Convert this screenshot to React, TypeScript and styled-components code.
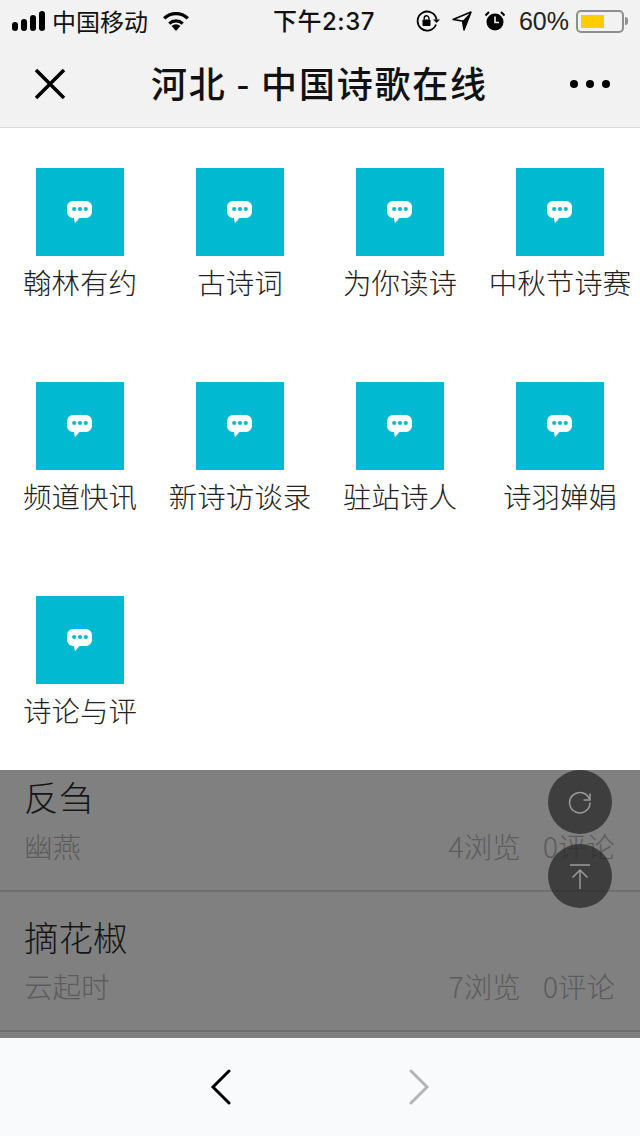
import React from 'react';
import styled, { createGlobalStyle } from 'styled-components';

const GlobalStyle = createGlobalStyle`
  html, body {
    margin: 0;
    padding: 0;
    background: #808080;
  }
  * {
    box-sizing: border-box;
  }
`;

const FONT = `"Noto Sans CJK SC", "Liberation Sans", sans-serif`;

const channels = [
  '翰林有约', '古诗词', '为你读诗', '中秋节诗赛',
  '频道快讯', '新诗访谈录', '驻站诗人', '诗羽婵娟',
  '诗论与评',
];

const articles = [
  { title: '反刍', author: '幽燕', views: 4, comments: 0 },
  { title: '摘花椒', author: '云起时', views: 7, comments: 0 },
  { title: '', author: '', views: 0, comments: 0 },
];

const Bubble = () => (
  <svg width="26" height="24" viewBox="0 0 26 24">
    <path
      d="M7 1h12a6 6 0 0 1 6 6v5a6 6 0 0 1-6 6h-6.500l-4.500 5.200-1.200-5.200h-.8a6 6 0 0 1-6-6v-5a6 6 0 0 1 6-6z"
      fill="#fff"
    />
    <circle cx="7.200" cy="9" r="2.100" fill="#01b9d1" />
    <circle cx="13" cy="9" r="2.100" fill="#01b9d1" />
    <circle cx="18.800" cy="9" r="2.100" fill="#01b9d1" />
  </svg>
);

const App = () => {
  return (
    <Page>
      <GlobalStyle />
      <Header>
        <StatusBar>
          <StatusLeft>
            <Signal>
              <Bar $h={9} />
              <Bar $h={12} />
              <Bar $h={16} />
              <Bar $h={20} />
            </Signal>
            <span>中国移动</span>
            <svg width="28" height="20" viewBox="0 0 28 20">
              <path d="M14 20l-4.400-5a6.200 6.200 0 0 1 8.800 0z" fill="#000" />
              <path d="M7.300 12.600a9.800 9.800 0 0 1 13.400 0" fill="none" stroke="#000" strokeWidth="3.200" />
              <path d="M2.200 7.400a17 17 0 0 1 23.600 0" fill="none" stroke="#000" strokeWidth="3.400" />
            </svg>
          </StatusLeft>
          <Clock>下午2:37</Clock>
          <StatusRight>
            <svg width="24" height="22" viewBox="0 0 24 22">
              <path d="M20 14.500a9.500 9.500 0 1 1 .5-5" fill="none" stroke="#000" strokeWidth="1.800" />
              <path d="M17 9.500h7l-3.500 3.500z" fill="#000" />
              <rect x="6.500" y="9.500" width="8" height="6.500" rx="1" fill="#000" />
              <path d="M8.200 9.500v-1.500a2.300 2.300 0 0 1 4.600 0v1.500" fill="none" stroke="#000" strokeWidth="1.400" />
            </svg>
            <LocationIcon width="20" height="20" viewBox="0 0 20 20">
              <path d="M1 8.500L19 1l-7 18-1.500-9z" fill="none" stroke="#000" strokeWidth="1.500" strokeLinejoin="round" />
              <path d="M19 1L10.500 10 12 19z" fill="#000" />
            </LocationIcon>
            <AlarmIcon width="20" height="20" viewBox="0 0 20 20">
              <circle cx="10" cy="11" r="8.500" fill="#000" />
              <path d="M10 5.500v6h4" fill="none" stroke="#f2f2f2" strokeWidth="1.600" />
              <path d="M.500 4.500L4 1M19.500 4.500L16 1" stroke="#000" strokeWidth="2" />
            </AlarmIcon>
            <Percent>60%</Percent>
            <Battery>
              <BatteryFill $level={60} />
            </Battery>
            <BatteryTip />
          </StatusRight>
        </StatusBar>
        <NavBar>
          <svg width="34" height="34" viewBox="0 0 34 34">
            <path d="M3 3l28 28M31 3L3 31" stroke="#000" strokeWidth="3.500" strokeLinecap="butt" fill="none" />
          </svg>
          <NavTitle>河北 - 中国诗歌在线</NavTitle>
          <Dots>
            <Dot />
            <Dot />
            <Dot />
          </Dots>
        </NavBar>
      </Header>

      <Body>
        <ArticleList>
          {articles.map((a, i) => (
            <ArticleRow key={i}>
              <ArticleTitle>{a.title}</ArticleTitle>
              {a.author && (
                <ArticleMeta>
                  <span>{a.author}</span>
                  <Stats>
                    <span>{a.views}浏览</span>
                    <span>{a.comments}评论</span>
                  </Stats>
                </ArticleMeta>
              )}
            </ArticleRow>
          ))}
        </ArticleList>

        <ChannelPanel>
          {channels.map((name) => (
            <ChannelCell key={name}>
              <ChannelTile>
                <Bubble />
              </ChannelTile>
              <ChannelName>{name}</ChannelName>
            </ChannelCell>
          ))}
        </ChannelPanel>

        <FloatButton $top={642}>
          <svg width="26" height="26" viewBox="0 0 26 26">
            <path d="M22.500 10.500a10.200 10.200 0 1 0 .5 3" fill="none" stroke="#9a9a9a" strokeWidth="1.500" />
            <path d="M23 4.500v6.500h-6.500" fill="none" stroke="#9a9a9a" strokeWidth="1.500" />
          </svg>
        </FloatButton>
        <FloatButton $top={716}>
          <svg width="24" height="26" viewBox="0 0 24 26">
            <path d="M2 2h20M12 26V7M4.500 14.500L12 7l7.500 7.500" fill="none" stroke="#9a9a9a" strokeWidth="1.500" />
          </svg>
        </FloatButton>
      </Body>

      <Toolbar>
        <svg width="22" height="36" viewBox="0 0 22 36">
          <path d="M19 2L3 18l16 16" fill="none" stroke="#000" strokeWidth="3" strokeLinecap="round" />
        </svg>
        <svg width="22" height="36" viewBox="0 0 22 36">
          <path d="M3 2l16 16L3 34" fill="none" stroke="#b5b5b5" strokeWidth="3" strokeLinecap="round" />
        </svg>
      </Toolbar>
    </Page>
  );
};

const Page = styled.div`
  width: 640px;
  height: 1136px;
  display: flex;
  flex-direction: column;
  overflow: hidden;
  font-family: ${FONT};
`;

const Header = styled.header`
  background: #f2f2f2;
  height: 128px;
  border-bottom: 1px solid #d9d9d9;
  flex: none;
`;

const StatusBar = styled.div`
  height: 40px;
  display: grid;
  grid-template-columns: 1fr auto 1fr;
  align-items: center;
  font-size: 24px;
  color: #111;
`;

const StatusLeft = styled.div`
  display: flex;
  align-items: center;
  padding-left: 12px;
  gap: 7px;
  line-height: 40px;
  svg {
    margin-left: 7px;
  }
`;

const Signal = styled.div`
  display: flex;
  align-items: flex-end;
  gap: 3px;
`;

const Bar = styled.i<{ $h: number }>`
  display: block;
  width: 6px;
  height: ${(p) => p.$h}px;
  background: #000;
  border-radius: 3px;
`;

const Clock = styled.div`
  font-family: "Inter", "Noto Sans CJK SC", sans-serif;
  font-weight: 500;
  letter-spacing: 0.500px;
  line-height: 40px;
  margin-left: 8px;
  padding-top: 2px;
`;

const StatusRight = styled.div`
  display: flex;
  align-items: center;
  justify-content: flex-end;
  padding-right: 12px;
`;

const LocationIcon = styled.svg`
  margin-left: 12px;
`;

const AlarmIcon = styled.svg`
  margin-left: 13px;
`;

const Percent = styled.span`
  font-family: "Liberation Sans", sans-serif;
  font-size: 25px;
  margin-left: 14px;
  color: #222;
`;

const Battery = styled.div`
  width: 48px;
  height: 23px;
  margin-left: 7px;
  padding: 3px;
  border: 2px solid #8e8e8e;
  border-radius: 5px;
`;

const BatteryFill = styled.div<{ $level: number }>`
  width: ${(p) => p.$level}%;
  height: 100%;
  background: #ffcc00;
`;

const BatteryTip = styled.div`
  width: 3px;
  height: 8px;
  margin-left: 1px;
  background: #8e8e8e;
  border-radius: 0 3px 3px 0;
`;

const NavBar = styled.div`
  height: 87px;
  display: flex;
  align-items: center;
  justify-content: space-between;
  padding: 0 30px 0 33px;
`;

const NavTitle = styled.div`
  font-size: 36px;
  font-weight: 500;
  letter-spacing: 1.800px;
  color: #111;
  line-height: 85px;
  margin-left: 2px;
  padding-bottom: 2px;
`;

const Dots = styled.div`
  display: flex;
  gap: 8px;
`;

const Dot = styled.i`
  display: block;
  width: 8px;
  height: 8px;
  border-radius: 50%;
  background: #000;
`;

const Body = styled.main`
  position: relative;
  flex: 1;
  min-height: 0;
  overflow: hidden;
  background: #808080;
`;

const ArticleList = styled.div`
  padding-top: 624px;
`;

const ArticleRow = styled.div`
  height: 140px;
  padding: 20px 25px 0 24px;
  border-bottom: 2px solid #6e6e6e;
`;

const ArticleTitle = styled.div`
  font-size: 34.500px;
  font-weight: 300;
  line-height: 48px;
  color: #151515;
`;

const ArticleMeta = styled.div`
  display: flex;
  justify-content: space-between;
  margin-top: 6px;
  font-size: 28.500px;
  font-weight: 300;
  line-height: 40px;
  color: #5c5c5c;
`;

const Stats = styled.div`
  display: flex;
  gap: 22px;
`;

const ChannelPanel = styled.nav`
  position: absolute;
  top: 0;
  left: 0;
  right: 0;
  height: 642px;
  display: grid;
  grid-template-columns: repeat(4, 160px);
  grid-auto-rows: 214px;
  background: #fff;
`;

const ChannelCell = styled.div`
  display: flex;
  flex-direction: column;
  align-items: center;
  padding-top: 40px;
`;

const ChannelTile = styled.div`
  width: 88px;
  height: 88px;
  display: flex;
  align-items: center;
  justify-content: center;
  background: #01b9d1;
`;

const ChannelName = styled.div`
  margin-top: 6px;
  font-size: 28.500px;
  font-weight: 300;
  line-height: 40px;
  color: #222;
  white-space: nowrap;
`;

const FloatButton = styled.div<{ $top: number }>`
  position: absolute;
  top: ${(p) => p.$top}px;
  right: 28px;
  width: 64px;
  height: 64px;
  display: flex;
  align-items: center;
  justify-content: center;
  border-radius: 50%;
  background: rgba(40, 40, 40, 0.75);
`;

const Toolbar = styled.footer`
  flex: none;
  height: 98px;
  display: flex;
  align-items: center;
  justify-content: center;
  gap: 176px;
  background: #f9fafc;
`;

export default App;
